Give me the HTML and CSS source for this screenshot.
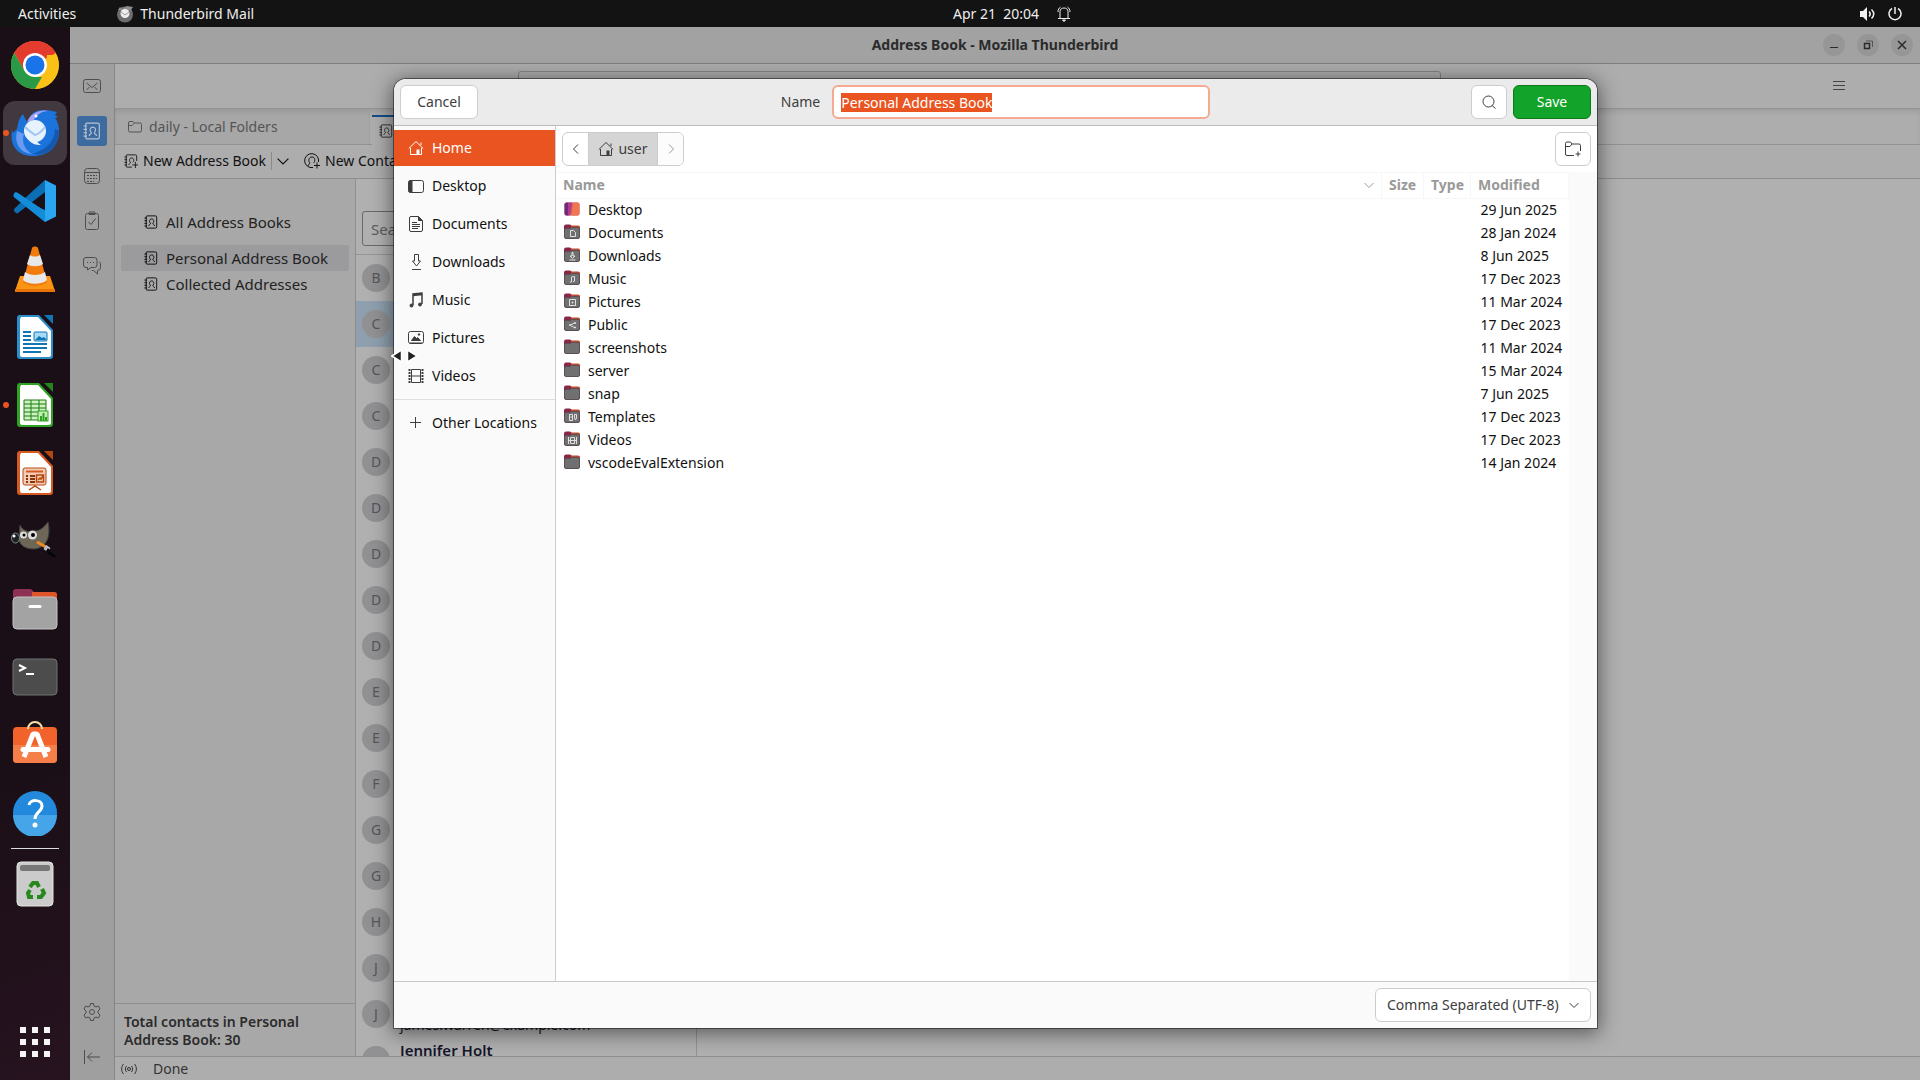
FILE: index.html
```html
<!DOCTYPE html>
<html lang="en">
  <head>
    <meta charset="UTF-8" />
    <meta name="viewport" content="width=device-width, initial-scale=1.0" />
    <title>Address Book - Mozilla Thunderbird</title>
    <link rel="stylesheet" href="styles.css">
  </head>
  <body>
    <!-- shared icons -->
    <svg class="defs" width="0" height="0" aria-hidden="true">
      <symbol id="book" viewBox="0 0 16 16">
        <path d="M3.500 1h9.500A1.500 1.500 0 0 1 14.500 2.500v11a1.500 1.500 0 0 1-1.500 1.500H3.500a1 1 0 0 1-1-1V2a1 1 0 0 1 1-1zM.5 3.500h3M.5 6.500h3M.5 9.500h3M.5 12.500h3" />
        <path d="M7.500 9.500C5.500 8 6 4.500 8.700 4.500S12 8 10 9.500M7.500 9.500c0 1.500-2 1-2 3M10 9.500c0 1.500 2 1 2 3" />
      </symbol>
      <symbol id="home" viewBox="0 0 16 16">
        <path d="M.8 8.500 8 1.500l7.200 7M2.500 8v6.500h11V8M13 5V2.500" />
        <path d="M8.500 14V9.500h3V14z" fill="currentColor" stroke="none" />
      </symbol>
      <symbol id="folder" viewBox="0 0 16 16">
        <path d="M0 2.500A2 2 0 0 1 2 .5h4L8 2h6a2 2 0 0 1 2 2v8H0z" fill="#8a2646" />
        <path d="M7 1.500h7a2 2 0 0 1 2 2V4H7z" fill="#c04a30" />
        <path d="M.5 6A1.500 1.500 0 0 1 2 4.500h4l1.500-1H14A1.500 1.500 0 0 1 15.500 5v8a1.500 1.500 0 0 1-1.500 1.500H2A1.500 1.500 0 0 1 .5 13z" fill="#707070" stroke="#5a5054" />
      </symbol>
      <symbol id="chevron" viewBox="0 0 10 10">
        <path d="M.5 3 5 7.500 9.500 3" />
      </symbol>
    </svg>

    <header class="topbar">
      <div class="topbar-left">
        <span>Activities</span>
        <span class="app-menu">
          <svg width="18" height="18" viewBox="0 0 18 18"><circle cx="9" cy="9.500" r="8" fill="#6d6d6d" /><path d="M2 5 4 2l2 2 5-3 6 1-2 3 2 4-3-4z" fill="#8d8d8d" /><circle cx="9" cy="8.500" r="4.500" fill="#eee" /><path d="m5 7 4 3 4-3" stroke="#999" fill="none" /></svg>
          Thunderbird Mail
        </span>
      </div>
      <div class="clock">
        <span>Apr 21&nbsp; 20:04</span>
        <svg class="line" width="14" height="16" viewBox="0 0 14 16"><path d="M1 12.500h12M3 12V5.500C3 3 5 2 7 2s4 1 4 3.500V12M1 6C1 3.500 2 2 3.500 1M13 6c0-2.500-1-4-2.500-5" /><path d="M5.500 14h3L7 15.500z" fill="currentColor" /></svg>
      </div>
      <div class="tray">
        <svg width="15" height="14" viewBox="0 0 15 14"><path d="M0 4h3l4-4v14L3 10H0z" fill="#f2f2f2" /><path d="M9 4.500c1.500 1.500 1.500 3.500 0 5M11.500 2.500c3 3 3 6 0 9" fill="none" stroke="#f2f2f2" stroke-width="1.500" /></svg>
        <svg class="line" width="14" height="14" viewBox="0 0 14 14"><path d="M7 0v7M4 1.500a6 6 0 1 0 6 0" stroke-width="1.500" /></svg>
      </div>
    </header>

    <div class="desktop">
      <nav class="dock" aria-label="Dock">
        <span class="dock-item">
          <svg width="48" height="48" viewBox="0 0 48 48"><circle cx="24" cy="24" r="24" fill="#fbc116" /><path d="M24 24 3.200 12A24 24 0 0 1 44.800 12z" fill="#e33b2e" /><path d="M24 12h20.800A24 24 0 0 0 3.200 12L13.600 30z" fill="#e33b2e" /><path d="M3.200 12 13.600 30 24 36h10.400L24 48A24 24 0 0 1 3.200 12z" fill="#2a9a47" /><path d="M24 48 34.400 30 36 14h9.500A24 24 0 0 1 24 48z" fill="#fbc116" /><circle cx="24" cy="24" r="12" fill="#fff" /><circle cx="24" cy="24" r="9.500" fill="#1a73e8" /></svg>
        </span>
        <span class="dock-item active running">
          <svg width="48" height="48" viewBox="0 0 48 48"><path d="M1 21c-3 18 8 26 21 26 16 0 26-10 26-25 0-6-2-11-4-13l3-1-3-2 2-3C34 0 25 0 20 6l-4 7c-2-3-3-6-4-8-5 5-5 11-6 15l-4 4z" fill="#1a74dc" /><path d="M16 13C20 3 31 0 38 2c-8 0-13 4-15 9z" fill="#a9a0f2" /><path d="M6 22c-3 12 3 22 15 23-7-4-11-12-8-20z" fill="#6b9bf0" /><path d="M44 20c0 13-9 20-22 25 16 3 26-9 26-23z" fill="#1558b0" /><circle cx="24" cy="22" r="11" fill="#e6f3ff" /><path d="M14 18c4 4 7 6 10 8 4-1 7-4 10-8" fill="none" stroke="#9fc4ee" stroke-width="2" /><path d="M17 30c3 5 8 6 13 6-3-2-4-3-4-5z" fill="#e6f3ff" /><circle cx="25" cy="7" r="1.500" fill="#fff" /></svg>
        </span>
        <span class="dock-item">
          <svg width="44" height="44" viewBox="0 0 44 44"><path d="M32 1 11 20 4 14c-1-1-2-1-3 1-1 1-1 2 0 3l31 25V31L10 22" fill="#0a7bc7" /><path d="M32 1v12L5 34c-1 1-2 0-4-2 0-1 0-2 1-3z" fill="#0a6fb5" /><path d="M1 15c1-2 2-2 4-1l27 18v11L1 18z" fill="#148cd8" /><path d="m32 1 10 5c1 0 1 1 1 2v28c0 1 0 2-1 2l-10 5z" fill="#2aa5f0" /></svg>
        </span>
        <span class="dock-item">
          <svg width="40" height="46" viewBox="0 0 40 46"><path d="M5 30h30l5 15H0z" fill="#fb9412" /><path d="M0 43h40v3H0z" fill="#e87405" /><path d="M17 2c1-2 5-2 6 0l9 34c-4 5-20 5-24 0z" fill="#f27b0d" /><path d="m15 9-3 9c4 3 12 3 16 0l-3-9c-3 2-7 2-10 0zM10 26l-2 8c5 5 19 5 24 0l-2-8c-5 4-15 4-20 0z" fill="#e8e8e8" /></svg>
        </span>
        <span class="dock-item">
          <svg width="38" height="46" viewBox="0 0 38 46"><path d="M5 1h18l14 15v26a3 3 0 0 1-3 3H4a3 3 0 0 1-3-3V4a3 3 0 0 1 4-3z" fill="#2d8fc9" /><path d="M5 3h17l13 14v24a2 2 0 0 1-2 2H6a2 2 0 0 1-2-2V5z" fill="#fff" /><path d="M28 1h9v9z" fill="#0e76b5" /><path d="M7 18h8M7 22h8M7 26h8M7 30h24M7 34h24M7 38h18" stroke="#0e76b5" stroke-width="2" /><rect x="18" y="18" width="13" height="9" rx="1" fill="#a8daf5" stroke="#0e76b5" /><path d="m19 26 4-4 3 2 2-1 3 3z" fill="#0e76b5" /></svg>
        </span>
        <span class="dock-item running">
          <svg width="38" height="46" viewBox="0 0 38 46"><path d="M5 1h18l14 15v26a3 3 0 0 1-3 3H4a3 3 0 0 1-3-3V4a3 3 0 0 1 4-3z" fill="#2fa321" /><path d="M5 3h17l13 14v24a2 2 0 0 1-2 2H6a2 2 0 0 1-2-2V5z" fill="#fff" /><path d="M28 1h9v9z" fill="#26851a" /><path d="M8 18h22v20H8zM8 22h22M8 26h22M8 30h22M8 34h22M15 18v20M23 18v20" fill="#ccf2c0" stroke="#1e7d14" /><rect x="22" y="29" width="10" height="10" fill="#c2edb5" stroke="#2fa321" /><path d="M25 39v-5M27.500 39v-8M30 39v-4" stroke="#2fa321" stroke-width="2" /></svg>
        </span>
        <span class="dock-item">
          <svg width="38" height="46" viewBox="0 0 38 46"><path d="M5 1h18l14 15v26a3 3 0 0 1-3 3H4a3 3 0 0 1-3-3V4a3 3 0 0 1 4-3z" fill="#d65a22" /><path d="M5 3h17l13 14v24a2 2 0 0 1-2 2H6a2 2 0 0 1-2-2V5z" fill="#fff" /><path d="M28 1h9v9z" fill="#b5480f" /><rect x="7" y="18" width="23" height="17" rx="2" fill="#f3cdb8" stroke="#b5480f" /><path d="M10 21.500h17" stroke="#d65a22" stroke-width="2" /><path d="M10 26h2M10 29h2M10 32h2M14 26h5M14 29h5M14 32h5" stroke="#8a3408" stroke-width="2" /><path d="M20.500 25h7v7h-7zM22 30l2-2 1 1 2-3M13 40l6-4 6 4" fill="none" stroke="#b5480f" stroke-width="1.500" /></svg>
        </span>
        <span class="dock-item">
          <svg width="48" height="40" viewBox="0 0 48 40"><path d="M9 4c2 5 8 8 14 6 7 0 11-5 14-9 3 14-1 26-14 27-9 0-14-4-15-9z" fill="#6e6757" stroke="#3c4444" /><ellipse cx="4.500" cy="17" rx="4" ry="5" fill="#1c2224" stroke="#7d8888" /><circle cx="3" cy="15" r="1.500" fill="#fff" /><circle cx="12.500" cy="14" r="3.500" fill="#ddd" /><circle cx="21.500" cy="14" r="4.500" fill="#ddd" /><circle cx="13" cy="14" r="1.500" /><circle cx="22" cy="14" r="2" /><path d="m26 21 9 5" stroke="#f08a1c" stroke-width="3" /><path d="m34 26 4 3" stroke="#bbc" stroke-width="5" /><path d="m37 27 9 10c-6-1-9-4-11-7z" fill="#050505" /></svg>
        </span>
        <span class="dock-item">
          <svg width="46" height="42" viewBox="0 0 46 42"><path d="M1 4a3 3 0 0 1 3-3h15l3 3h20a3 3 0 0 1 3 3v9H1z" fill="#8e2f54" /><path d="M20 4h22a3 3 0 0 1 3 3v6H20z" fill="#e0542a" /><rect x="1" y="9" width="44" height="32" rx="4" fill="#a3a3a3" stroke="#c4c4c4" /><path d="M18 18.500h10" stroke="#fff" stroke-width="3" stroke-linecap="round" /></svg>
        </span>
        <span class="dock-item">
          <svg width="46" height="38" viewBox="0 0 46 38"><rect x="1" y="1" width="44" height="36" rx="4" fill="#4c4c4c" stroke="#6e7573" /><path d="m7 7 6 3-6 3M14 16h8" fill="none" stroke="#fff" stroke-width="2" /></svg>
        </span>
        <span class="dock-item">
          <svg width="46" height="50" viewBox="0 0 46 50"><rect x="1" y="7" width="44" height="36" rx="4" fill="#f2622b" /><path d="M1 25h44v14a4 4 0 0 1-4 4H5a4 4 0 0 1-4-4z" fill="#f47f49" /><path d="M16 9a7 7 0 0 1 14 0" fill="none" stroke="#f7dfa6" stroke-width="2" /><path d="m12 37 9-23h4l9 23" fill="none" stroke="#fff" stroke-width="5" stroke-linejoin="bevel" /><path d="M11 29.500h25" stroke="#fff" stroke-width="5" stroke-linecap="round" /></svg>
        </span>
        <span class="dock-item">
          <svg width="46" height="46" viewBox="0 0 46 46"><circle cx="23" cy="23" r="22" fill="#2389dc" /><path d="M1 25a22 22 0 0 0 44 0z" fill="#45a5e8" /><path d="M17 15c1-6 13-6 13 1 0 6-7 6-7 13" fill="none" stroke="#fff" stroke-width="3" /><circle cx="23" cy="35" r="2.500" fill="#fff" /></svg>
        </span>
        <hr class="dock-sep">
        <span class="dock-item">
          <svg width="38" height="46" viewBox="0 0 38 46"><rect x="1" y="1" width="36" height="44" rx="4" fill="#cbcbcb" stroke="#e4e4e4" /><rect x="4" y="4" width="30" height="6" rx="2" fill="#777" /><g fill="none" stroke="#27891b" stroke-width="4"><path d="m14 26 3-4h4l2 4M26 28l2 4-3 4h-4M17 36h-4l-1-4 2-3" /></g></svg>
        </span>
        <button class="show-apps" aria-label="Show applications">
          <svg width="30" height="30" viewBox="0 0 30 30"><path d="M0 3h6M12 3h6M24 3h6M0 15h6M12 15h6M24 15h6M0 27h6M12 27h6M24 27h6" stroke="#f5f5f5" stroke-width="6" /></svg>
        </button>
      </nav>

      <main class="window">
        <div class="titlebar">
          <h1>Address Book - Mozilla Thunderbird</h1>
          <div class="window-buttons">
            <button aria-label="Minimize"><svg class="line" width="10" height="10" viewBox="0 0 10 10"><path d="M1 7.500h8" /></svg></button>
            <button aria-label="Restore"><svg class="line" width="10" height="10" viewBox="0 0 10 10"><path d="M1.500 3.500h5v5h-5z" stroke-width="1.500" /><path d="M3 1h6.500v6" stroke-width=".6" /></svg></button>
            <button aria-label="Close"><svg class="line" width="10" height="10" viewBox="0 0 10 10"><path d="m1 1 8 8M9 1 1 9" stroke-width="1.500" /></svg></button>
          </div>
        </div>

        <div class="app">
          <nav class="spaces" aria-label="Spaces">
            <button aria-label="Mail"><svg class="line" width="18" height="18" viewBox="0 0 18 18"><rect x=".5" y="2.500" width="17" height="13" rx="2" /><path d="m3.500 6 5.500 4.500L14.500 6M3.500 13l3-3M14.500 13l-3-3" /></svg></button>
            <button class="current" aria-label="Address Book"><svg class="line" width="18" height="18"><use href="#book" /></svg></button>
            <button aria-label="Calendar"><svg class="line" width="18" height="18" viewBox="0 0 18 18"><rect x="1.500" y="1.500" width="15" height="15" rx="3" /><path d="M1.500 5.500h15" /><path d="M4 8.500h10M4 11.500h10M4 14.500h7" stroke-dasharray="2 1" /></svg></button>
            <button aria-label="Tasks"><svg class="line" width="18" height="20" viewBox="0 0 18 20"><rect x="2.500" y="2.500" width="13" height="16" rx="2" /><path d="M6 2.500a1 1 0 0 1 1-1.500h4a1 1 0 0 1 1 1.500v1H6zM5.500 11l2.500 2.500 4.500-6" /></svg></button>
            <button aria-label="Chat"><svg class="line" width="18" height="18" viewBox="0 0 18 18"><path d="M3 .5h8.500a2.500 2.500 0 0 1 2.500 2.500v5a2.500 2.500 0 0 1-2.500 2.500H8L4.500 13v-2.500H3A2.500 2.500 0 0 1 .5 8V3A2.500 2.500 0 0 1 3 .5z" /><path d="M16 5c1.500.5 1.500 1 1.500 3v2.500a3 3 0 0 1-3 3V17l-4-3.500H9" /><path d="M4 5.500h7" stroke-dasharray="1 2" /></svg></button>
            <button class="push" aria-label="Settings"><svg class="line" width="18" height="18" viewBox="0 0 18 18"><path d="m7.500.5h3l.5 2.500 2 1 2.500-1L17 6l-2 2v2l2 2-1.500 3-2.500-1-2 1-.5 2.500h-3L7 15l-2-1-2.500 1L1 12l2-2V8L1 6l1.500-3L5 4l2-1z" /><circle cx="9" cy="9" r="2.500" /></svg></button>
            <button aria-label="Collapse"><svg class="line" width="18" height="16" viewBox="0 0 18 16"><path d="M1.500 1v14M17 8H4.500M9 3.500 4.500 8 9 12.500" /></svg></button>
          </nav>

          <div class="content">
            <div class="unified">
              <input class="global-search" type="text" aria-label="Search">
              <button class="menu" aria-label="Menu"><svg class="line" width="12" height="10" viewBox="0 0 12 10"><path d="M0 .5h12M0 4.500h12M0 8.500h12" /></svg></button>
            </div>

            <div class="tabs">
              <button class="tab">
                <svg class="line" width="14" height="14" viewBox="0 0 14 14"><path d="M.5 3a1.500 1.500 0 0 1 1.500-1.500h3L6.500 3H12a1.500 1.500 0 0 1 1.500 1.500v6A1.500 1.500 0 0 1 12 12H2A1.500 1.500 0 0 1 .5 10.500zM.5 5.500H4L6.500 3" /></svg>
                daily - Local Folders
              </button>
              <button class="tab selected"><svg class="line" width="14" height="14"><use href="#book" /></svg>Address Book</button>
            </div>

            <div class="toolbar">
              <button class="tool"><svg class="line" width="14" height="14" viewBox="0 0 16 16"><path d="M14.500 8V2.500A1.500 1.500 0 0 0 13 1H3.500a1 1 0 0 0-1 1v12a1 1 0 0 0 1 1H9M.5 3.500h3M.5 6.500h3M.5 9.500h3M.5 12.500h3M7.500 9.500C5.500 8 6 4.500 8.700 4.500S12 8 10 9.500M7.500 9.500c0 1.500-2 1-2 3M13 9v7M9.500 12.500h7" /></svg>New Address Book</button>
              <button class="tool-drop" aria-label="More"><svg class="line" width="12" height="12"><use href="#chevron" /></svg></button>
              <button class="tool"><svg class="line" width="16" height="16" viewBox="0 0 16 16"><path d="M9 14.500A7 7 0 1 1 14.500 9M4 13c0-2 2-2 2-3-2-1.500-1.500-6 2-6s3.500 4.500 1.500 6M13 9.500v6M10 12.500h6" /></svg>New Contact</button>
            </div>

            <div class="panes">
              <aside class="books">
                <ul>
                  <li class="all"><svg class="line" width="14" height="14"><use href="#book" /></svg>All Address Books</li>
                  <li class="picked"><svg class="line" width="14" height="14"><use href="#book" /></svg>Personal Address Book</li>
                  <li><svg class="line" width="14" height="14"><use href="#book" /></svg>Collected Addresses</li>
                </ul>
                <div class="total">Total contacts in Personal Address Book: 30</div>
              </aside>

              <section class="contacts">
                <div class="contact-search"><input type="text" placeholder="Search" aria-label="Search contacts"></div>
                <ul>
                  <li><span class="avatar">B</span></li>
                  <li class="picked"><span class="avatar">C</span></li>
                  <li><span class="avatar">C</span></li>
                  <li><span class="avatar">C</span></li>
                  <li><span class="avatar">D</span></li>
                  <li><span class="avatar">D</span></li>
                  <li><span class="avatar">D</span></li>
                  <li><span class="avatar">D</span></li>
                  <li><span class="avatar">D</span></li>
                  <li><span class="avatar">E</span></li>
                  <li><span class="avatar">E</span></li>
                  <li><span class="avatar">F</span></li>
                  <li><span class="avatar">G</span></li>
                  <li><span class="avatar">G</span></li>
                  <li><span class="avatar">H</span></li>
                  <li><span class="avatar">J</span></li>
                  <li><span class="avatar">J</span><div><b>James Warren</b><small>james.warren@example.com</small></div></li>
                  <li><span class="avatar"></span><div><b>Jennifer Holt</b></div></li>
                </ul>
              </section>
              <section class="card"></section>
            </div>

            <footer class="status">
              <svg class="line" width="16" height="12" viewBox="0 0 16 12"><circle cx="8" cy="6" r="1.500" /><path d="M5.500 3c-1.500 2-1.500 4 0 6M10.500 3c1.500 2 1.500 4 0 6M2.500 1C0 4 0 8 2.500 11M13.500 1c2.500 3 2.500 7 0 10" /></svg>
              Done
            </footer>
          </div>
        </div>

        <div class="overlay">
          <form class="dialog" role="dialog" aria-label="Save">
            <div class="dialog-head">
              <button class="btn" type="button">Cancel</button>
              <div class="name-field">
                <label for="name">Name</label>
                <input type="text" id="name" value="Personal Address Book">
              </div>
              <button class="btn icon-btn" type="button" aria-label="Search"><svg class="line" width="14" height="14" viewBox="0 0 14 14"><circle cx="6.500" cy="6.500" r="5.500" /><path d="m10 10.500 3.500 3" /></svg></button>
              <button class="btn save" type="button">Save</button>
            </div>

            <div class="dialog-body">
              <ul class="places">
                <li class="current"><svg class="line" width="16" height="16"><use href="#home" /></svg>Home</li>
                <li><svg class="line" width="16" height="16" viewBox="0 0 16 16"><rect x=".5" y="2.500" width="15" height="12" rx="2" /><path d="M1 3h3v11H1z" fill="currentColor" /></svg>Desktop</li>
                <li><svg class="line" width="16" height="16" viewBox="0 0 16 16"><path d="M3 .5h7.500l4 4V14a1.500 1.500 0 0 1-1.500 1.500H3A1.500 1.500 0 0 1 1.500 14V2A1.500 1.500 0 0 1 3 .5zM4 6.500h5M4 8.500h8M4 10.500h8M4 12.500h6" /><path d="M10.500.5v4h4z" fill="currentColor" /></svg>Documents</li>
                <li><svg class="line" width="16" height="16" viewBox="0 0 16 16"><path d="M6.500.5h4V7h2l-4 5-4-5h2zM4 15.500h9" /></svg>Downloads</li>
                <li><svg class="line" width="16" height="16" viewBox="0 0 16 16"><path d="M5 13V2l9-1v11M5 3.500l9-1" stroke-width="1.500" /><circle cx="3.500" cy="13.500" r="1.500" fill="currentColor" /><circle cx="12" cy="12.500" r="1.500" fill="currentColor" /></svg>Music</li>
                <li><svg class="line" width="16" height="16" viewBox="0 0 16 16"><rect x=".5" y="1.500" width="15" height="12" rx="2" /><path d="m3.500 10.500 3-4 2 2 1-1 3 3zM2 13h12" fill="currentColor" /><circle cx="11" cy="4.500" r=".8" fill="currentColor" /></svg>Pictures</li>
                <li><svg class="line" width="16" height="16" viewBox="0 0 16 16"><path d="M3.500 1.500h9v13h-9zM3.500 8h9" /><path d="M1.500 1v14M14.500 1v14" stroke-dasharray="2 1" stroke-width="2" /></svg>Videos</li>
                <li class="other"><svg class="line" width="16" height="16" viewBox="0 0 16 16"><path d="M7.500 2v11M2 7.500h11" /></svg>Other Locations</li>
              </ul>

              <div class="browser">
                <div class="pathbar">
                  <div class="crumbs">
                    <button type="button" aria-label="Back"><svg class="line" width="10" height="10" viewBox="0 0 10 10"><path d="M7 .5 2.500 5 7 9.500" /></svg></button>
                    <button class="here" type="button"><svg class="line" width="16" height="16"><use href="#home" /></svg>user</button>
                    <button class="off" type="button" aria-label="Forward"><svg class="line" width="10" height="10" viewBox="0 0 10 10"><path d="M3 .5 7.500 5 3 9.500" /></svg></button>
                  </div>
                  <button class="btn icon-btn" type="button" aria-label="New Folder"><svg class="line" width="18" height="16" viewBox="0 0 18 16"><path d="M10 14.500H3A1.500 1.500 0 0 1 1.500 13V2.500A1.500 1.500 0 0 1 3 1h3.500L8 3h7a1.500 1.500 0 0 1 1.500 1.500V10M1.500 5.500H6L8 3M14 10.500v5M11.500 13h5" /></svg></button>
                </div>

                <div class="listing">
                  <table class="files">
                    <colgroup><col><col class="c-size"><col class="c-type"><col class="c-mod"></colgroup>
                    <thead>
                      <tr><th><span class="sort">Name<svg class="line" width="10" height="10"><use href="#chevron" /></svg></span></th><th>Size</th><th>Type</th><th>Modified</th></tr>
                    </thead>
                    <tbody>
                      <tr><td><svg width="16" height="16" viewBox="0 0 16 16"><rect x=".5" y="1.500" width="15" height="13" rx="2" fill="#d3506b" /><path d="M9 1.500h4.500a2 2 0 0 1 2 2v9a2 2 0 0 1-2 2H7z" fill="#ee7650" /><path d="M2.500 1.500H4v13H2.500a2 2 0 0 1-2-2v-9a2 2 0 0 1 2-2z" fill="#6f2a78" /><path d="M4 1.500h4l-2 13H4z" fill="#b13b8c" /></svg>Desktop</td><td></td><td></td><td>29 Jun 2025</td></tr>
                      <tr><td><svg width="16" height="16"><use href="#folder" /><path class="mark" d="M6.500 6.500h3l2 2v4h-5z" /></svg>Documents</td><td></td><td></td><td>28 Jan 2024</td></tr>
                      <tr><td><svg width="16" height="16"><use href="#folder" /><path class="mark" d="M8 5.500h1V9h2l-2.500 2.500L6 9h2zM5.500 13h6" /></svg>Downloads</td><td></td><td></td><td>8 Jun 2025</td></tr>
                      <tr><td><svg width="16" height="16"><use href="#folder" /><path class="mark" d="M7.500 12V7l3-.5V11M6 12h1.500M9 11.500h1.500" /></svg>Music</td><td></td><td></td><td>17 Dec 2023</td></tr>
                      <tr><td><svg width="16" height="16"><use href="#folder" /><path class="mark" d="M5.500 6.500h6v6h-6zM8 9h1v1H8z" /></svg>Pictures</td><td></td><td></td><td>11 Mar 2024</td></tr>
                      <tr><td><svg width="16" height="16"><use href="#folder" /><path class="mark" d="M5.500 8.500h1v1h-1zM10.500 6.500h1v1h-1zM10.500 11h1v1h-1zM6.500 9l4-2M6.500 9.500l4 2" /></svg>Public</td><td></td><td></td><td>17 Dec 2023</td></tr>
                      <tr><td><svg width="16" height="16"><use href="#folder" /></svg>screenshots</td><td></td><td></td><td>11 Mar 2024</td></tr>
                      <tr><td><svg width="16" height="16"><use href="#folder" /></svg>server</td><td></td><td></td><td>15 Mar 2024</td></tr>
                      <tr><td><svg width="16" height="16"><use href="#folder" /></svg>snap</td><td></td><td></td><td>7 Jun 2025</td></tr>
                      <tr><td><svg width="16" height="16"><use href="#folder" /><path class="mark" d="M5.500 6.500h3v6h-3zM10.500 6.500h2V10l-1 2-1-2zM6.500 9h2" /></svg>Templates</td><td></td><td></td><td>17 Dec 2023</td></tr>
                      <tr><td><svg width="16" height="16"><use href="#folder" /><path class="mark" d="M4.500 6v7M12.500 6v7M6.500 6.500h4v6h-4zM5 9.500h8" /></svg>Videos</td><td></td><td></td><td>17 Dec 2023</td></tr>
                      <tr><td><svg width="16" height="16"><use href="#folder" /></svg>vscodeEvalExtension</td><td></td><td></td><td>14 Jan 2024</td></tr>
                    </tbody>
                  </table>
                </div>
              </div>
            </div>

            <div class="dialog-foot">
              <label class="select-wrap">
                <select aria-label="File type"><option>Comma Separated (UTF-8)</option></select>
                <svg class="line" width="10" height="10"><use href="#chevron" /></svg>
              </label>
            </div>
          </form>
        </div>
      </main>
    </div>

    <!-- column resize pointer -->
    <svg class="pointer" width="28" height="14" viewBox="0 0 28 14"><path d="M10.500 1v12L.8 7zM16.500 1v12l9.700-6z" fill="#222" stroke="#fff" stroke-width="1.500" /></svg>

    <script>
      const nameInput = document.getElementById("name");
      nameInput.focus();
      nameInput.select();
    </script>
  </body>
</html>
```
FILE: styles.css
```css
* {
  box-sizing: border-box;
}
body {
  margin: 0;
  height: 100vh;
  display: flex;
  flex-direction: column;
  overflow: hidden;
  font-family: "Noto Sans", sans-serif;
  font-size: 14px;
  line-height: 18px;
  color: #111;
  background-color: #1b0f17;
}
button,
input,
select {
  font: inherit;
  color: inherit;
}
button {
  margin: 0;
  padding: 0;
  border: none;
  background: none;
}
ul {
  list-style: none;
  margin: 0;
  padding: 0;
}
svg {
  flex: none;
}
.defs {
  position: absolute;
}
.line {
  fill: none;
  stroke: currentColor;
}

/* top bar */
.topbar {
  height: 27px;
  display: grid;
  grid-template-columns: 1fr auto 1fr;
  align-items: center;
  padding: 0 18px;
  background-color: #131313;
  color: #eee;
}
.topbar-left,
.clock,
.tray {
  display: flex;
  align-items: center;
}
.topbar-left {
  gap: 40px;
}
.app-menu {
  display: flex;
  gap: 6px;
}
.clock {
  gap: 18px;
  padding-left: 104px;
}
.tray {
  justify-content: flex-end;
  gap: 13px;
}

/* dock */
.desktop {
  flex: 1;
  min-height: 0;
  display: flex;
}
.dock {
  width: 70px;
  flex: none;
  display: flex;
  flex-direction: column;
  align-items: center;
  gap: 4px;
  padding: 6px 0;
  background: linear-gradient(160deg, #1b0f17 70%, #26131f);
}
.dock-item {
  position: relative;
  width: 64px;
  height: 64px;
  flex: none;
  display: flex;
  align-items: center;
  justify-content: center;
  border-radius: 12px;
}
.dock-item.active {
  background-color: #423840;
}
.running::before {
  content: "";
  position: absolute;
  left: 0;
  top: 29px;
  width: 6px;
  height: 6px;
  border-radius: 50%;
  background-color: #e95420;
}
.dock-sep {
  width: 48px;
  margin: -1px 0 -1px;
  border: none;
  border-top: 1px solid #ddd;
}
.show-apps {
  width: 64px;
  height: 64px;
  margin-top: auto;
  display: flex;
  align-items: center;
  justify-content: center;
}

/* main window */
.window {
  position: relative;
  flex: 1;
  min-width: 0;
  display: flex;
  flex-direction: column;
  background-color: #adadad;
}
.titlebar {
  height: 37px;
  flex: none;
  display: grid;
  align-items: center;
  border-bottom: 1px solid #7e7e7e;
  background-color: #a2a2a2;
}
.titlebar > * {
  grid-area: 1 / 1;
}
.titlebar h1 {
  margin: 0;
  font-size: 14px;
  text-align: center;
  color: #2b2b2b;
}
.window-buttons {
  display: flex;
  justify-content: flex-end;
  gap: 12px;
  padding-right: 7px;
}
.window-buttons button {
  width: 22px;
  height: 22px;
  display: flex;
  align-items: center;
  justify-content: center;
  border-radius: 50%;
  background-color: #969696;
  color: #2b2b2b;
}
.app {
  flex: 1;
  min-height: 0;
  display: flex;
}
.spaces {
  width: 45px;
  flex: none;
  display: flex;
  flex-direction: column;
  align-items: center;
  gap: 15px;
  padding: 7px 0 8px;
  border-right: 1px solid #858585;
  background-color: #9f9f9f;
  color: #4d4d4d;
}
.spaces button {
  width: 30px;
  height: 30px;
  display: flex;
  align-items: center;
  justify-content: center;
  border-radius: 3px;
}
.spaces .current {
  background-color: #3d6b9f;
  color: #b5c5d6;
}
.spaces .push {
  margin-top: auto;
}
.content {
  flex: 1;
  min-width: 0;
  display: flex;
  flex-direction: column;
}
.unified {
  height: 45px;
  flex: none;
  display: grid;
  grid-template-columns: 403fr 923fr 479fr;
  align-items: center;
  border-bottom: 1px solid #929292;
}
.global-search {
  grid-column: 2;
  height: 30px;
  border: 1px solid #858585;
  border-radius: 3px;
  background-color: #adadad;
}
.menu {
  justify-self: end;
  padding-right: 75px;
  color: #444;
}
.tabs {
  height: 36px;
  flex: none;
  display: flex;
  border-bottom: 1px solid #929292;
  box-shadow: inset 0 4px 6px -2px #9a9a9a;
}
.tab {
  display: flex;
  align-items: center;
  gap: 7px;
  padding: 0 13px;
  color: #555;
}
.tab:first-child {
  width: 255px;
  border-right: 1px solid #a1a1a1;
  background-color: rgba(0, 0, 0, 0.03);
}
.tab.selected {
  width: 255px;
  margin-left: 2px;
  padding-left: 7px;
  margin-top: 6px;
  margin-bottom: -1px;
  border-top: 2px solid #124d8c;
  background-color: #adadad;
  color: #222;
}
.toolbar {
  height: 34px;
  flex: none;
  display: flex;
  align-items: center;
  padding-left: 9px;
  padding-bottom: 1px;
  border-bottom: 1px solid #8e8e8e;
}
.tool {
  display: flex;
  align-items: center;
  gap: 5px;
}
.tool-drop {
  height: 18px;
  display: flex;
  align-items: center;
  margin-left: 5px;
  margin-right: 15px;
  padding-left: 5px;
  border-left: 1px solid #8a8a8a;
}

/* panes */
.panes {
  flex: 1;
  min-height: 0;
  display: flex;
}
.books {
  width: 241px;
  flex: none;
  display: flex;
  flex-direction: column;
  border-right: 1px solid #8f8f8f;
  background-color: #a8a8a8;
}
.books ul {
  flex: 1;
  padding: 30px 6px;
}
.books li {
  height: 26px;
  display: flex;
  align-items: center;
  gap: 8px;
  padding-left: 23px;
  padding-bottom: 1px;
  border-radius: 3px;
  font-size: 15px;
  color: #222;
}
.books svg {
  color: #000;
}
.books .all {
  margin-bottom: 10px;
}
.books .picked {
  background-color: #9b9b9e;
}
.total {
  padding: 9px 50px 7px 9px;
  border-top: 1px solid #8f8f8f;
  font-weight: 600;
  color: #2b2b2b;
}
.contacts {
  width: 341px;
  flex: none;
  overflow: hidden;
  border-right: 1px solid #929292;
  background-color: #b0b0b0;
}
.contact-search {
  height: 76px;
  padding: 32px 6px 0;
  border-bottom: 1px solid #959595;
}
.contact-search input {
  width: 100%;
  height: 35px;
  padding: 0 8px;
  border: 1px solid #686868;
  border-radius: 3px;
  background-color: #b0b0b0;
  font-size: 15px;
}
.contact-search input::placeholder {
  color: #5c5c5c;
}
.contacts li {
  height: 46px;
  display: flex;
  align-items: center;
  gap: 10px;
  padding-left: 6px;
  color: #15152b;
}
.contacts .picked {
  background-color: #8f9fae;
}
.contacts li div {
  height: 40px;
}
.contacts b {
  display: block;
  font-size: 15px;
  line-height: 20px;
  font-weight: 600;
}
.contacts small {
  display: block;
  font-size: 14px;
  line-height: 22px;
}
.avatar {
  width: 28px;
  height: 28px;
  flex: none;
  border-radius: 50%;
  background-color: #919193;
  line-height: 28px;
  text-align: center;
  color: #55555c;
}
.card {
  flex: 1;
  background-color: #b0b0b0;
}
.status {
  height: 24px;
  flex: none;
  display: flex;
  align-items: center;
  gap: 16px;
  padding-left: 6px;
  border-top: 1px solid #8f8f8f;
  color: #333;
}

/* save dialog */
.overlay {
  position: absolute;
  inset: 0;
  padding: 52px 323px 52px 324px;
  display: flex;
}
.dialog {
  flex: 1;
  display: flex;
  flex-direction: column;
  overflow: hidden;
  border-radius: 12px 12px 0 0;
  background-color: #fafafa;
  box-shadow: 0 0 0 1px rgba(0, 0, 0, 0.45), 0 3px 20px 2px rgba(0, 0, 0, 0.5);
}
.dialog-head {
  height: 47px;
  flex: none;
  display: flex;
  align-items: center;
  gap: 6px;
  padding: 0 6px;
  border-bottom: 1px solid #bdbdbd;
  background-color: #ebebeb;
  color: #3d3d3d;
}
.btn {
  height: 34px;
  border: 1px solid #cdcdcd;
  border-radius: 6px;
  background-color: #fff;
  color: #3d3d3d;
}
.dialog-head .btn {
  width: 78px;
}
.dialog .icon-btn {
  width: 36px;
  display: flex;
  align-items: center;
  justify-content: center;
}
.dialog-head .save {
  border-color: #0b7a1a;
  background-color: #12a42a;
  color: #fff;
}
.name-field {
  flex: 1;
  display: flex;
  align-items: center;
  justify-content: center;
  gap: 12px;
  padding-left: 42px;
}
.name-field input {
  width: 378px;
  height: 34px;
  padding: 0 7px;
  border: 2px solid #f4aa90;
  border-radius: 6px;
  outline: none;
  background-color: #fff;
}
.name-field input::selection {
  background-color: #e95420;
  color: #fff;
}
.dialog-body {
  flex: 1;
  min-height: 0;
  display: flex;
}
.places {
  width: 162px;
  flex: none;
  padding-top: 4px;
  border-right: 1px solid #cdcdcd;
}
.places li {
  height: 36px;
  margin-bottom: 2px;
  display: flex;
  align-items: center;
  gap: 8px;
  padding-left: 14px;
}
.places svg {
  color: #3d3d3d;
}
.places .current,
.places .current svg {
  color: #fff;
}
.places .current {
  background-color: #e95420;
}
.places .other {
  height: 47px;
  margin-top: 5px;
  border-top: 1px solid #dedede;
}
.browser {
  flex: 1;
  display: flex;
  flex-direction: column;
  background-color: #fff;
}
.pathbar {
  display: flex;
  justify-content: space-between;
  padding: 6px;
}
.crumbs {
  display: flex;
  border: 1px solid #cdcdcd;
  border-radius: 6px;
  overflow: hidden;
  color: #3d3d3d;
}
.crumbs button {
  width: 25px;
  display: flex;
  align-items: center;
  justify-content: center;
  gap: 4px;
}
.crumbs .here {
  width: 70px;
  border: 1px solid #cdcdcd;
  border-width: 0 1px;
  background-color: #d5d5d5;
}
.crumbs .off {
  color: #999;
  background-color: #fcfcfc;
}
.listing {
  flex: 1;
  padding-right: 28px;
  background: linear-gradient(#fafafa, #fafafa) right / 28px 100% no-repeat;
}
.files {
  width: 100%;
  table-layout: fixed;
  border-collapse: collapse;
}
.c-size {
  width: 42px;
}
.c-type {
  width: 47px;
}
.c-mod {
  width: 98px;
}
.files th {
  height: 26px;
  padding: 0 7px 2px;
  border: 1px solid #f7f7f7;
  border-left: none;
  text-align: left;
  color: #999;
}
.files td {
  height: 23px;
  padding: 0 8px;
  white-space: nowrap;
}
.files td:last-child {
  padding-left: 10px;
}
.files td svg {
  margin-right: 8px;
  vertical-align: -2px;
}
.files th:nth-child(2),
.files th:nth-child(3) {
  padding-right: 0;
}
.sort {
  display: flex;
  align-items: center;
  justify-content: space-between;
}
.mark {
  fill: none;
  stroke: #e0e0e0;
}
.dialog-foot {
  height: 47px;
  flex: none;
  display: flex;
  justify-content: flex-end;
  padding: 6px;
  border-top: 1px solid #c8c8c8;
}
.select-wrap {
  display: grid;
  align-items: center;
  color: #3d3d3d;
}
.select-wrap > * {
  grid-area: 1 / 1;
}
.select-wrap select {
  height: 34px;
  width: 216px;
  padding: 0 11px;
  appearance: none;
  border: 1px solid #cdcdcd;
  border-radius: 6px;
  background-color: #fff;
}
.select-wrap svg {
  justify-self: end;
  margin-right: 12px;
  pointer-events: none;
}
.pointer {
  position: absolute;
  left: 391px;
  top: 349px;
}
```
